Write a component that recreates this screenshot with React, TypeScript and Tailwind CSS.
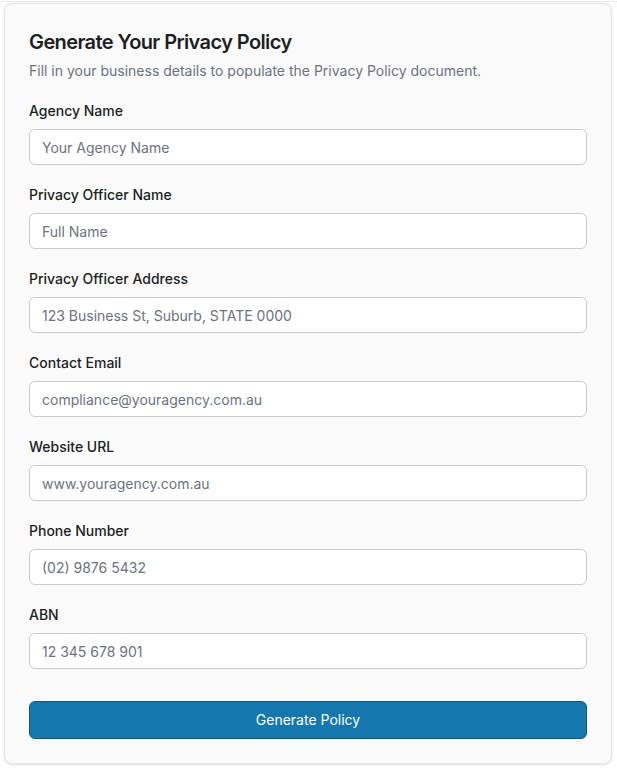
const FIELDS = [
  { label: 'Agency Name', placeholder: 'Your Agency Name' },
  { label: 'Privacy Officer Name', placeholder: 'Full Name' },
  { label: 'Privacy Officer Address', placeholder: '123 Business St, Suburb, STATE 0000' },
  { label: 'Contact Email', placeholder: 'compliance@youragency.com.au' },
  { label: 'Website URL', placeholder: 'www.youragency.com.au' },
  { label: 'Phone Number', placeholder: '(02) 9876 5432' },
  { label: 'ABN', placeholder: '12 345 678 901' },
];

export default function App() {
  return (
    <div
      className="min-h-[777px] bg-white pt-px"
      style={{ fontFamily: 'Inter, "Noto Sans", sans-serif' }}
    >
      <div className="h-px bg-[#e6e7ea]" />
      <div className="ml-[4px] mt-[1px] w-[608px] rounded-lg border border-[#e4e5e8] bg-[#fafafa] p-6 shadow-sm">
        <h1 className="text-xl font-semibold leading-7 tracking-[-0.03em] text-[#1c1f24]">
          Generate Your Privacy Policy
        </h1>
        <p className="mt-[5px] text-sm leading-5 text-[#6b7280]">
          Fill in your business details to populate the Privacy Policy document.
        </p>

        <div className="mt-5 flex flex-col gap-5">
          {FIELDS.map((f) => (
            <div key={f.label} className="flex flex-col gap-2">
              <label className="text-sm font-medium leading-5 text-[#1c1f24]">{f.label}</label>
              <input
                type="text"
                placeholder={f.placeholder}
                className="h-9 w-full rounded-md border border-[#c9ccd4] bg-white px-3 text-sm text-[#1c1f24] placeholder:text-[#6b7280] focus:outline-none"
              />
            </div>
          ))}
        </div>

        <button
          type="button"
          className="mt-8 w-full rounded-md border border-[#0f5b88] bg-[#1477ae] py-2 text-sm font-normal leading-5 text-white"
        >
          Generate Policy
        </button>
      </div>
    </div>
  );
}
